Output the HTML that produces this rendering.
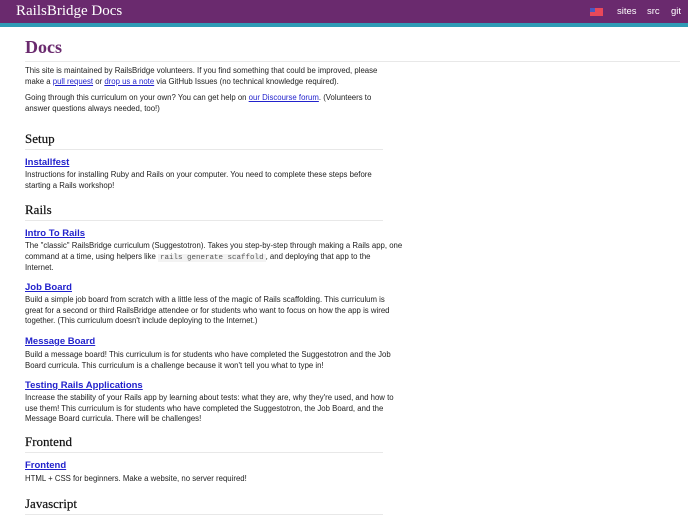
<!DOCTYPE html>
<html><head><meta charset="utf-8"><style>
body{margin:0;width:688px;height:512px;overflow:hidden;background:#fff;font-family:"Liberation Sans",sans-serif;color:#222;position:relative}
.hd{position:absolute;left:0;top:0;width:688px;height:23px;background:#6a2a6e}
.tl{position:absolute;left:0;top:23px;width:688px;height:4px;background:#2e9bb5}
.brand{position:absolute;left:16px;top:3px;color:#fff;font:15px "Liberation Serif",serif;}
.nav{position:absolute;top:6px;color:#fff;font-size:9.5px}
.b{position:absolute;left:25px;white-space:nowrap}
p.b{margin:0;font-size:7.8px;line-height:10.5px}
.h{font:13px "Liberation Serif",serif;color:#111;border-bottom:1px solid #e8e8e8;width:358px;padding-bottom:2px;-webkit-text-stroke:0.2px #111}
a{color:#2222cc}
.l{font-weight:bold;font-size:9.5px;color:#2222cc;text-decoration:underline}
code{font-family:"Liberation Mono",monospace;font-size:7.5px;background:#f3f3f3;color:#555;padding:0 2px}
</style></head><body>
<div class="hd"></div><div class="tl"></div>
<div class="brand">RailsBridge Docs</div>
<div style="position:absolute;left:590px;top:8px;width:13px;height:8px;background:#e8485a"><div style="width:5px;height:4px;background:#4a58c0"></div></div>
<div class="nav" style="left:617px">sites</div>
<div class="nav" style="left:647px">src</div>
<div class="nav" style="left:671px">git</div>
<div class="b" style="top:37px;font:bold 18px 'Liberation Serif',serif;color:#6a2a6e;width:655px;border-bottom:1px solid #e8e8e8;padding-bottom:3px">Docs</div>
<p class="b" style="top:66px">This site is maintained by RailsBridge volunteers. If you find something that could be improved, please<br>make a <a href="#">pull request</a> or <a href="#">drop us a note</a> via GitHub Issues (no technical knowledge required).</p>
<p class="b" style="top:93px">Going through this curriculum on your own? You can get help on <a href="#">our Discourse forum</a>. (Volunteers to<br>answer questions always needed, too!)</p>
<div class="b h" style="top:131px">Setup</div>
<div class="b l" style="top:157px">Installfest</div>
<p class="b" style="top:170px">Instructions for installing Ruby and Rails on your computer. You need to complete these steps before<br>starting a Rails workshop!</p>
<div class="b h" style="top:202px">Rails</div>
<div class="b l" style="top:228px">Intro To Rails</div>
<p class="b" style="top:241px">The "classic" RailsBridge curriculum (Suggestotron). Takes you step-by-step through making a Rails app, one<br>command at a time, using helpers like <code>rails generate scaffold</code>, and deploying that app to the<br>Internet.</p>
<div class="b l" style="top:282px">Job Board</div>
<p class="b" style="top:295px">Build a simple job board from scratch with a little less of the magic of Rails scaffolding. This curriculum is<br>great for a second or third RailsBridge attendee or for students who want to focus on how the app is wired<br>together. (This curriculum doesn't include deploying to the Internet.)</p>
<div class="b l" style="top:336px">Message Board</div>
<p class="b" style="top:350px">Build a message board! This curriculum is for students who have completed the Suggestotron and the Job<br>Board curricula. This curriculum is a challenge because it won't tell you what to type in!</p>
<div class="b l" style="top:380px">Testing Rails Applications</div>
<p class="b" style="top:393px">Increase the stability of your Rails app by learning about tests: what they are, why they're used, and how to<br>use them! This curriculum is for students who have completed the Suggestotron, the Job Board, and the<br>Message Board curricula. There will be challenges!</p>
<div class="b h" style="top:434px">Frontend</div>
<div class="b l" style="top:460px">Frontend</div>
<p class="b" style="top:474px">HTML + CSS for beginners. Make a website, no server required!</p>
<div class="b h" style="top:496px">Javascript</div>
</body></html>
